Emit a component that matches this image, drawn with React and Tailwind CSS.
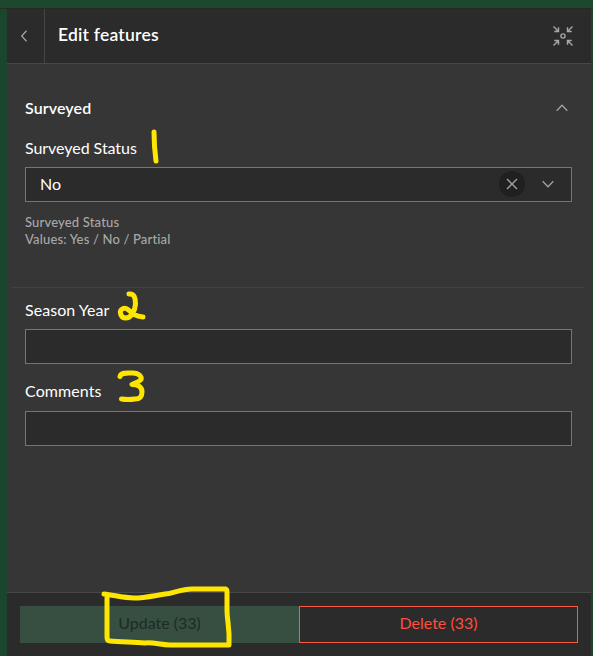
import React from "react";

function Chevron({ d, className }) {
  return (
    <svg width="16" height="16" viewBox="0 0 16 16" fill="none" stroke="#a3a3a3" strokeWidth="1.3" className={className}>
      <path d={d} />
    </svg>
  );
}

function CollapseIcon() {
  return (
    <svg width="20" height="20" viewBox="0 0 20 20" fill="none" stroke="#a6a6a6" strokeWidth="1.4">
      <circle cx="10" cy="10" r="2.100" />
      <path d="M.5.5l5 5M1.300 5.5h4.200V1.300M19.500.5l-5 5M18.700 5.500h-4.200V1.300M.5 19.500l5-5M1.300 14.500h4.200v4.200M19.500 19.500l-5-5M18.700 14.500h-4.200v4.200" />
    </svg>
  );
}

function Annotations() {
  return (
    <svg
      width="593"
      height="656"
      viewBox="0 0 593 656"
      className="pointer-events-none absolute left-0 top-0"
      fill="none"
      stroke="#ffe600"
      strokeWidth="5"
      strokeLinecap="round"
      strokeLinejoin="round"
    >
      <path d="M154 132Q154 146 156 161" />
      <path d="M129 294C134.500 293.500 135.500 298 135.500 304C135 311 131.500 318 125.500 318C121 318 119 312 121.500 309.500C126 305.500 129.500 311.500 134 314.500Q138 316.500 143 317" />
      <path d="M120 376.500C121 372 128 373 133 373C139 373 142 377 141 379.500C139 382 135 383 132 384.500C138 384.500 142 387 142 392C142 397 140 399 135 399Q128 400 121.500 399" />
      <path d="M104 594C114 595 123 598 134 598C145 598 157 595 169 593.500C176 592 183 589 192 589H225Q227 589 227 592V610C227 621 230 628 229 645H170C160 645 154 642 145 643C131 642 120 642 110 641Q107 641 107 637V597" />
    </svg>
  );
}

export default function App() {
  return (
    <div className="relative flex h-[656px] w-[593px] flex-col overflow-hidden bg-[#19472e] font-['Lato',sans-serif] text-[16px] leading-5 text-white [font-variant-ligatures:none]">
      <div className="h-[9px] shrink-0 border-b border-[#222b25] bg-[#1d482d]" />
      <div className="ml-[7px] mr-0.5 flex grow flex-col bg-[#363636]">
        <header className="flex h-[55px] shrink-0 items-center border-b border-[#474747] bg-[#2b2b2b]">
          <button className="flex h-full w-[38px] items-center justify-center border-r border-[#474747]">
            <Chevron d="M9.500 2.700L4.700 8l4.800 5.300" className="mr-0.5" />
          </button>
          <h1 className="ml-[13px] pb-0.5 text-[17.500px] font-semibold tracking-[0.22px]">Edit features</h1>
          <button className="ml-auto mr-[18px]"><CollapseIcon /></button>
        </header>

        <main className="flex grow flex-col">
          <section className="ml-[4px] mr-[6px] h-[224px] border-b border-[#414141] pl-[14px] pr-[13px] pt-[34px]">
            <div className="flex h-5 items-center justify-between pr-[2px]">
              <h2 className="font-semibold tracking-[0.1px]">Surveyed</h2>
              <Chevron d="M2.700 10.700L8 5.300l5.300 5.400" />
            </div>
            <div className="mt-5 tracking-[-0.05px]">Surveyed Status</div>
            <div className="mt-[9px] flex h-[35px] items-center border border-[#757575] bg-[#2b2b2b] pb-px pl-[14px] pr-[15px]">
              <span className="grow pb-px">No</span>
              <span className="mr-[15px] flex size-[26px] items-center justify-center rounded-full bg-[#202020]">
                <Chevron d="M3 3l10 10M13 3L3 13" />
              </span>
              <Chevron d="M2.700 5.300L8 10.700l5.300-5.400" />
            </div>
            <p className="mt-3 text-[13px] font-medium leading-[17px] tracking-[0.17px] text-[#a8a8a8]">
              <span className="block">Surveyed Status</span>
              <span className="block">Values: Yes / No / Partial</span>
            </p>
          </section>
          <section className="ml-[18px] mr-[19px] pt-[12px]">
            <label className="block">
              <span className="block tracking-[0.05px]">Season Year</span>
              <span className="mt-[9px] block h-[35px] border border-[#757575] bg-[#2b2b2b]" />
            </label>
            <label className="mt-[17px] block">
              <span className="block tracking-[0.1px]">Comments</span>
              <span className="mt-[10px] block h-[35px] border border-[#757575] bg-[#2b2b2b]" />
            </label>
          </section>
        </main>

        <footer className="flex h-16 shrink-0 border-t border-[#474747] bg-[#2b2b2b] px-[13px] pt-[13px]">
          <button className="h-[37px] w-[279px] bg-[#364f40] pb-[3px] text-[#202b25]">Update (33)</button>
          <button className="h-[37px] w-[279px] border border-[#fe583e] pb-[3px] text-[#fe4e3e]">Delete (33)</button>
        </footer>
      </div>
      <Annotations />
    </div>
  );
}
